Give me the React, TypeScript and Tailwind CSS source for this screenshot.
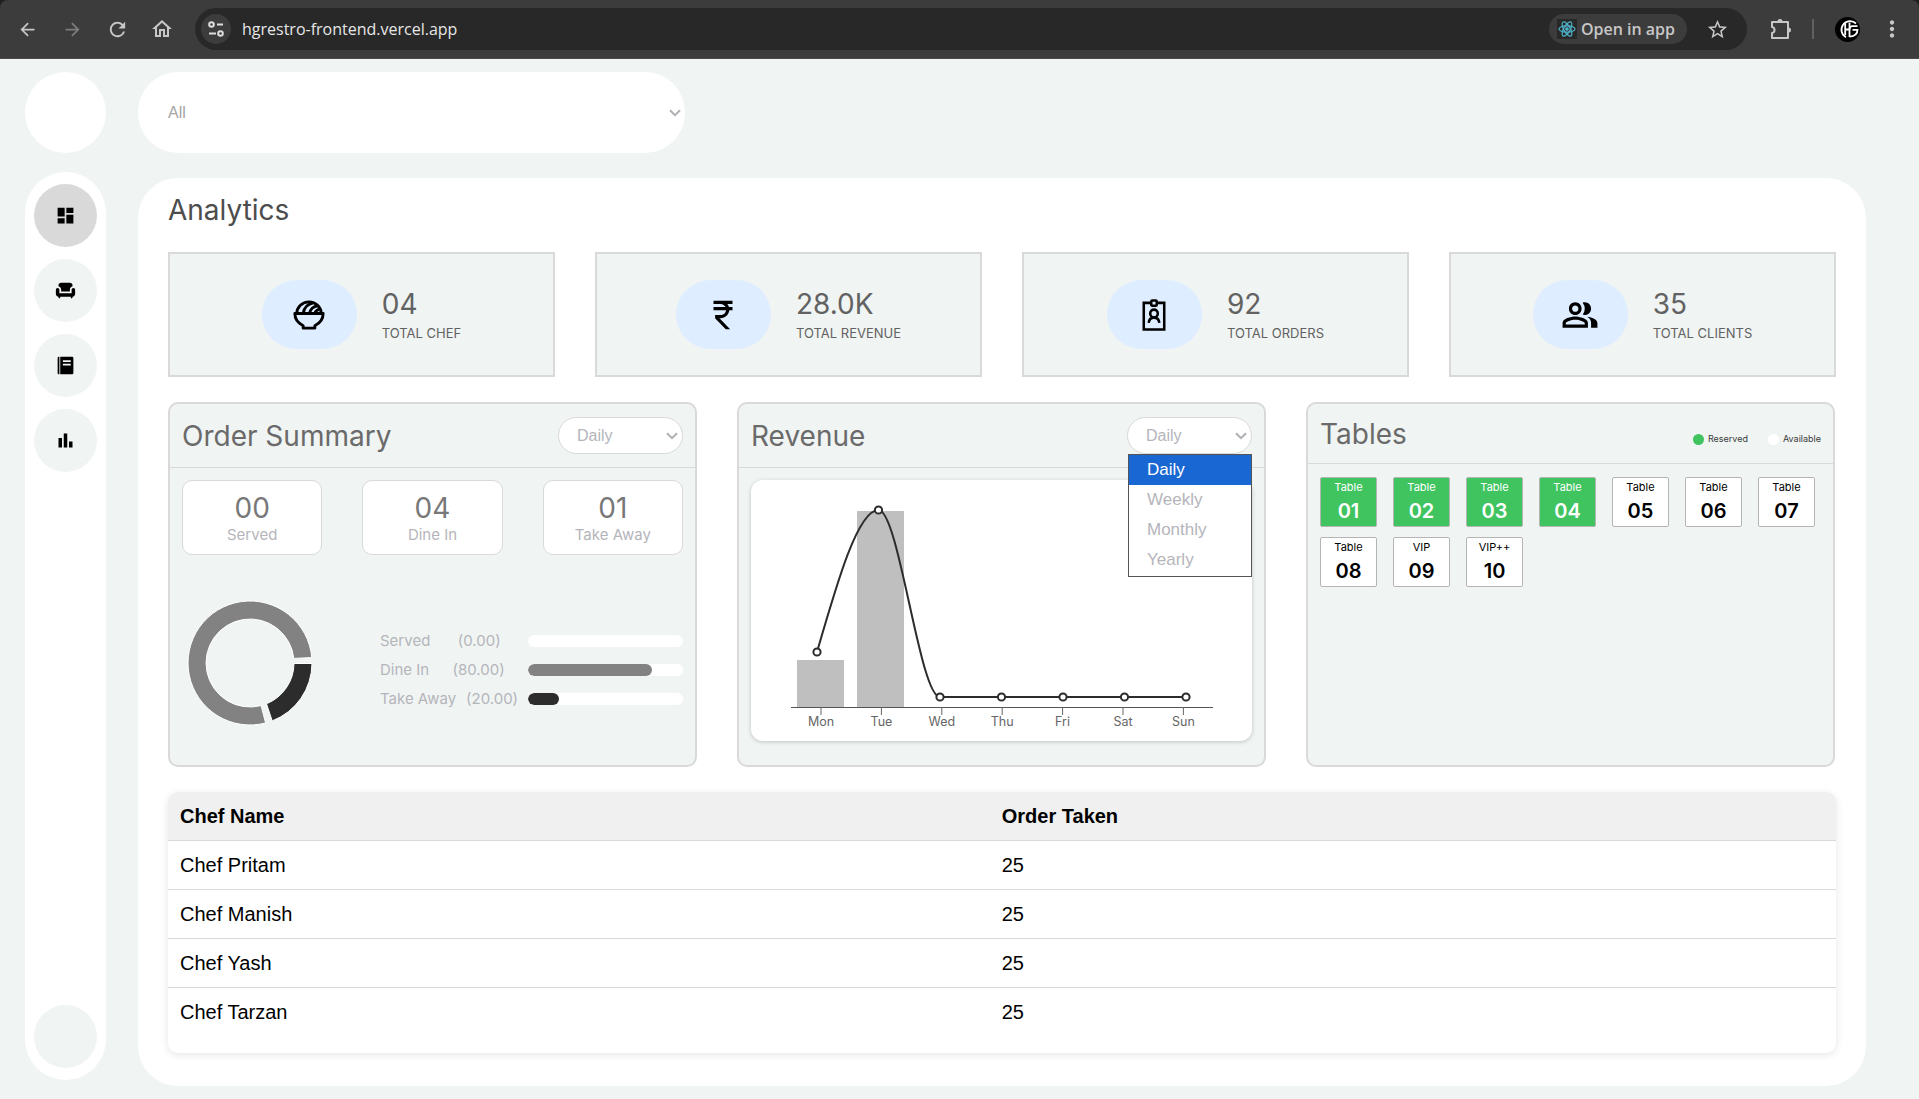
import { useState, type ComponentType, type ReactNode } from 'react';
import {
  MdArrowBack,
  MdArrowForward,
  MdBarChart,
  MdChair,
  MdCurrencyRupee,
  MdDashboard,
  MdMoreVert,
  MdOutlineHome,
  MdOutlinePeopleAlt,
  MdRefresh,
  MdStarBorder,
} from 'react-icons/md';

type IconProps = { size?: number };

const PERIODS = ['Daily', 'Weekly', 'Monthly', 'Yearly'];

/* ---------- icons ---------- */

function OrderBook({ size = 21 }: IconProps) {
  return (
    <svg width={size} height={size} viewBox="0 0 24 24" fill="currentColor" aria-hidden="true">
      <path d="M3 3.5C3 2.7 3.6 2 4.4 2H5v20h-.6c-.8 0-1.4-.7-1.4-1.5z" />
      <path
        fillRule="evenodd"
        d="M6 2h13.500A1.500 1.500 0 0 1 21 3.500v17a1.500 1.500 0 0 1-1.500 1.500H6zM9 6v2h9V6zm0 4v2h9v-2z"
      />
    </svg>
  );
}

function SaladBowl({ size = 36 }: IconProps) {
  return (
    <svg
      width={size}
      height={size}
      viewBox="-1.5 -0.5 39 39"
      fill="none"
      stroke="currentColor"
      strokeWidth="3"
      strokeLinejoin="round"
      aria-hidden="true"
    >
      <path d="M5.500 17.500a12.500 12 0 0 1 25 0" />
      <path d="M12 17.500c.8-6 5-10 10.500-11" />
      <path d="M18.500 17.500c.6-4 4-7.500 8.500-8" />
      <path d="M24 17.500c.4-2 2.500-4 5-4.500" />
      <path d="M3.500 17.500h29c0 5.500-3.500 10-8.500 12.500v2.500H12V30c-5-2.500-8.500-7-8.500-12.500z" />
    </svg>
  );
}

function Clipboard({ size = 36 }: IconProps) {
  return (
    <svg
      width={size}
      height={size}
      viewBox="0 0 36 36"
      fill="none"
      stroke="currentColor"
      strokeWidth="2.400"
      aria-hidden="true"
    >
      <path d="M15 6.500H8.300v25.300h19.400V6.500H21" />
      <rect x="15.400" y="4.200" width="5.200" height="5" rx="1" />
      <circle cx="18" cy="16.500" r="3.600" />
      <path d="M13 25.500c.3-3 2.200-5 5-5s4.700 2 5 5" />
    </svg>
  );
}

function SiteSettings() {
  return (
    <svg width="16" height="18" viewBox="0 0 16 18" fill="none" stroke="#dedede" strokeWidth="2" aria-hidden="true">
      <circle cx="3.500" cy="4.500" r="2.300" />
      <path d="M9 4.500h6M1 13.500h7" />
      <circle cx="12.500" cy="13.500" r="2.300" />
    </svg>
  );
}

function ReactLogo() {
  return (
    <svg width="18" height="18" viewBox="0 0 18 18" fill="none" stroke="#4fb3cc" strokeWidth="1.200" aria-hidden="true">
      <ellipse cx="9" cy="9" rx="8" ry="3.200" />
      <ellipse cx="9" cy="9" rx="8" ry="3.200" transform="rotate(60 9 9)" />
      <ellipse cx="9" cy="9" rx="8" ry="3.200" transform="rotate(120 9 9)" />
      <circle cx="9" cy="9" r="1.200" fill="#4fb3cc" />
    </svg>
  );
}

function Puzzle() {
  return (
    <svg width="22" height="22" viewBox="0 0 22 22" fill="none" stroke="currentColor" strokeWidth="2" strokeLinejoin="round" aria-hidden="true">
      <path d="M2 4h16v16H2v-5c3.400-.4 3.400-5.600 0-6z" />
      <path d="M7.500 3.500a2.500 2.500 0 0 1 5 0zM18.500 9.500a2.500 2.500 0 0 1 0 5z" fill="currentColor" stroke="none" />
    </svg>
  );
}

function ProfileMark() {
  return (
    <svg width="25" height="25" viewBox="0 0 25 25" fill="none" stroke="#fff" strokeWidth="1.800" aria-hidden="true">
      <circle cx="12.500" cy="12.500" r="12.500" fill="#000" stroke="none" />
      <path d="M21 6.500A8.600 8.600 0 1 0 11 20.300" />
      <path d="M10.200 6v12M10.200 12.500h4.300M14.500 5.500v14.500" />
      <path d="M22.500 9.200h-5c-2 0-2.800 1.200-2.800 3M17.500 12.800h5c0 4-2.500 6.500-8 6.800" />
    </svg>
  );
}

function Chevron() {
  return (
    <svg width="12" height="8" viewBox="0 0 12 8" fill="none" stroke="#aeb0b4" strokeWidth="2" aria-hidden="true">
      <path d="M1 1.200l5 5 5-5" />
    </svg>
  );
}

/* ---------- browser toolbar ---------- */

function ToolbarButton({ label, className = '', children }: { label: string; className?: string; children: ReactNode }) {
  return (
    <button type="button" aria-label={label} className={`flex size-8 items-center justify-center ${className}`}>
      {children}
    </button>
  );
}

function BrowserBar() {
  return (
    <div className="bg-[#1f1f1f]">
      <header className="flex h-[59px] items-center rounded-t-lg border-b border-[#4a4a4a] bg-[#3c3c3c] font-['Open_Sans',sans-serif] text-[#c7c7c7]">
        <nav aria-label="Browser" className="flex gap-[13px] pl-[11px]">
          <ToolbarButton label="Back">
            <MdArrowBack size={21} />
          </ToolbarButton>
          <ToolbarButton label="Forward" className="text-[#7c7c7c]">
            <MdArrowForward size={21} />
          </ToolbarButton>
          <ToolbarButton label="Reload">
            <MdRefresh size={23} />
          </ToolbarButton>
          <ToolbarButton label="Home">
            <MdOutlineHome size={24} />
          </ToolbarButton>
        </nav>
        <div className="ml-[17px] flex h-[42px] flex-1 items-center rounded-full bg-[#282828] pr-[14px] pl-[6px]">
          <button
            type="button"
            aria-label="Site information"
            className="flex size-[30px] items-center justify-center rounded-full bg-[#3c3c3c]"
          >
            <SiteSettings />
          </button>
          <input
            aria-label="Address"
            defaultValue="hgrestro-frontend.vercel.app"
            className="ml-[11px] min-w-0 flex-1 bg-transparent text-[16px] text-[#e6e6e6] outline-none"
          />
          <button
            type="button"
            className="flex h-[30px] items-center gap-1 rounded-full bg-[#3c3c3c] pr-3 pl-2 text-[16px] font-semibold text-[#c7c7c7]"
          >
            <span className="flex size-5 items-center justify-center bg-[#282828]">
              <ReactLogo />
            </span>
            Open in app
          </button>
          <ToolbarButton label="Bookmark" className="ml-[14px]">
            <MdStarBorder size={23} />
          </ToolbarButton>
        </div>
        <div className="flex items-center pr-[11px]">
          <ToolbarButton label="Extensions" className="ml-[18px]">
            <Puzzle />
          </ToolbarButton>
          <span className="mx-[15px] h-5 w-[2px] bg-[#606060]" />
          <ToolbarButton label="Profile" className="ml-[2px]">
            <ProfileMark />
          </ToolbarButton>
          <ToolbarButton label="Menu" className="ml-[13px]">
            <MdMoreVert size={26} />
          </ToolbarButton>
        </div>
      </header>
    </div>
  );
}

/* ---------- sidebar ---------- */

const NAV: { label: string; Icon: ComponentType<IconProps> }[] = [
  { label: 'Dashboard', Icon: MdDashboard },
  { label: 'Tables', Icon: MdChair },
  { label: 'Orders', Icon: OrderBook },
  { label: 'Statistics', Icon: MdBarChart },
];

function Sidebar() {
  return (
    <aside className="flex w-[81px] shrink-0 flex-col gap-[19px] pb-[6px]">
      <div className="size-[81px] rounded-full bg-white" />
      <nav
        aria-label="Sections"
        className="flex flex-1 flex-col items-center justify-between rounded-full bg-white py-3"
      >
        <div className="flex flex-col gap-3">
          {NAV.map(({ label, Icon }, i) => (
            <button
              key={label}
              type="button"
              aria-label={label}
              className={`flex size-[63px] items-center justify-center rounded-full text-black ${
                i === 0 ? 'bg-[#d9d9d9]' : 'bg-[#f0f4f3]'
              }`}
            >
              <Icon size={21} />
            </button>
          ))}
        </div>
        <div className="size-[63px] rounded-full bg-[#f0f4f3]" />
      </nav>
    </aside>
  );
}

/* ---------- analytics ---------- */

const STATS: { value: string; label: string; Icon: ComponentType<IconProps> }[] = [
  { value: '04', label: 'TOTAL CHEF', Icon: SaladBowl },
  { value: '28.0K', label: 'TOTAL REVENUE', Icon: MdCurrencyRupee },
  { value: '92', label: 'TOTAL ORDERS', Icon: Clipboard },
  { value: '35', label: 'TOTAL CLIENTS', Icon: MdOutlinePeopleAlt },
];

function StatCard({ value, label, Icon }: (typeof STATS)[number]) {
  return (
    <article className="flex h-[125px] items-center justify-center gap-[25px] border-2 border-[#d9d9d9] bg-[#f0f4f3]">
      <div className="flex h-[69px] w-[95px] items-center justify-center rounded-full bg-[#deedff] text-black">
        <Icon size={38} />
      </div>
      <div className="text-[#626262]">
        <p className="text-[28px] leading-[34px]">{value}</p>
        <p className="pt-[2px] text-[13px] leading-[20px]">{label}</p>
      </div>
    </article>
  );
}

function PeriodSelect({ label, children }: { label: string; children?: ReactNode }) {
  const [period, setPeriod] = useState('Daily');
  return (
    <div className="relative w-[125px]">
      <select
        aria-label={label}
        value={period}
        onChange={(e) => setPeriod(e.target.value)}
        className="h-[37px] w-full appearance-none rounded-full border border-[#d9d9d9] bg-white pl-[18px] font-['Liberation_Sans',sans-serif] text-[16px] text-[#b5b5bb] outline-none"
      >
        {PERIODS.map((p) => (
          <option key={p}>{p}</option>
        ))}
      </select>
      <span className="pointer-events-none absolute inset-y-0 right-[5px] flex items-center">
        <Chevron />
      </span>
      {children}
    </div>
  );
}

function Widget({ title, action, children }: { title: string; action: ReactNode; children: ReactNode }) {
  return (
    <section className="flex h-[365px] flex-col rounded-[10px] border-2 border-[#d9d9d9] bg-[#f0f4f3]">
      <div className="flex items-center justify-between border-b border-[#d9d9d9] px-3 py-[13px]">
        <h2 className="text-[28px] leading-[34px] text-[#6a6a6a]">{title}</h2>
        {action}
      </div>
      {children}
    </section>
  );
}

const SUMMARY = [
  { count: '00', label: 'Served', share: 0, color: 'bg-white' },
  { count: '04', label: 'Dine In', share: 80, color: 'bg-[#828282]' },
  { count: '01', label: 'Take Away', share: 20, color: 'bg-[#2c2c2c]' },
];

function Donut() {
  return (
    <svg width="126" height="126" viewBox="-63 -63 126 126" stroke="#fff" strokeWidth="1" role="img" aria-label="Order split">
      <path d="M61.800 -5.400A62 62 0 1 0 15.600 60L11.100 42.600A44 44 0 1 1 43.800 -4.600z" fill="#828282" />
      <path d="M62 0.500A62 62 0 0 1 22.200 57.900L16.500 40.800A44 44 0 0 0 44 0.500z" fill="#2c2c2c" />
    </svg>
  );
}

function OrderSummary() {
  return (
    <Widget title="Order Summary" action={<PeriodSelect label="Order summary period" />}>
      <div className="grid grid-cols-3 gap-10 px-3 pt-3">
        {SUMMARY.map((s) => (
          <div key={s.label} className="h-[75px] rounded-[10px] border border-[#d9d9d9] bg-white pt-[10px] text-center">
            <p className="text-[28px] leading-[34px] text-[#787878]">{s.count}</p>
            <p className="text-[15px] leading-[20px] text-[#b5b5bb]">{s.label}</p>
          </div>
        ))}
      </div>
      <div className="mt-[45px] flex items-center justify-between pr-3 pl-[17px]">
        <Donut />
        <ul className="mt-[14px] flex w-[303px] flex-col gap-[9px] text-[15px] leading-[20px] text-[#b5b5bb]">
          {SUMMARY.map((s) => (
            <li key={s.label} className="flex items-center">
              <span>{s.label}</span>
              <span className="flex-1 text-center">({s.share.toFixed(2)})</span>
              <span className="h-3 w-[155px] overflow-hidden rounded-full bg-white">
                <span className={`block h-full rounded-full ${s.color}`} style={{ width: `${s.share}%` }} />
              </span>
            </li>
          ))}
        </ul>
      </div>
    </Widget>
  );
}

const DAYS = ['Mon', 'Tue', 'Wed', 'Thu', 'Fri', 'Sat', 'Sun'];
const POINT_Y = [172, 30, 217, 217, 217, 217, 217];

function RevenueChart() {
  return (
    <svg viewBox="0 0 501 261" className="block w-full" role="img" aria-label="Revenue by day">
      <rect x="46" y="180" width="47" height="47" fill="#bfbfbf" />
      <rect x="106" y="31" width="47" height="196" fill="#bfbfbf" />
      <path d="M40 227.500H462" stroke="#555" strokeWidth="1" />
      {DAYS.map((day, i) => (
        <g key={day}>
          <path d={`M${70 + i * 60.4} 227v8`} stroke="#666" strokeWidth="1" />
          <text x={70 + i * 60.4} y="246" textAnchor="middle" fontSize="12.5" fill="#666">
            {day}
          </text>
        </g>
      ))}
      <path
        d="M66 172C86.500 101 107 30 127.500 30C148 30 168.500 217 189 217H435"
        fill="none"
        stroke="#2c2c2c"
        strokeWidth="2"
      />
      {POINT_Y.map((y, i) => (
        <circle key={DAYS[i]} cx={66 + i * 61.5} cy={y} r="3.600" fill="#fff" stroke="#2c2c2c" strokeWidth="2" />
      ))}
    </svg>
  );
}

function Revenue() {
  return (
    <Widget
      title="Revenue"
      action={
        <PeriodSelect label="Revenue period">
          <ul
            role="listbox"
            aria-label="Revenue period options"
            className="absolute top-full right-0 z-10 w-[124px] border border-[#555] bg-white pb-px font-['Liberation_Sans',sans-serif] text-[17px] leading-[30px] text-[#b5b5bb]"
          >
            {PERIODS.map((p, i) => (
              <li
                key={p}
                role="option"
                aria-selected={i === 0}
                className={`pl-[18px] ${i === 0 ? 'bg-[#1967d2] text-white' : ''}`}
              >
                {p}
              </li>
            ))}
          </ul>
        </PeriodSelect>
      }
    >
      <div className="mx-3 mt-3 rounded-xl bg-white shadow-[0_1px_4px_rgba(0,0,0,0.2)]">
        <RevenueChart />
      </div>
    </Widget>
  );
}

const TABLES = [
  { name: 'Table', reserved: true },
  { name: 'Table', reserved: true },
  { name: 'Table', reserved: true },
  { name: 'Table', reserved: true },
  { name: 'Table', reserved: false },
  { name: 'Table', reserved: false },
  { name: 'Table', reserved: false },
  { name: 'Table', reserved: false },
  { name: 'VIP', reserved: false },
  { name: 'VIP++', reserved: false },
];

function Tables() {
  return (
    <section className="flex h-[365px] flex-col rounded-[10px] border-2 border-[#d9d9d9] bg-[#f0f4f3]">
      <div className="flex items-end justify-between border-b border-[#d9d9d9] px-3 pt-[13px] pb-3">
        <h2 className="text-[28px] leading-[34px] text-[#6a6a6a]">Tables</h2>
        <div className="flex gap-5 pb-[6px] text-[9px] leading-[12px] text-[#3a3a3a]">
          <span className="flex items-center gap-1">
            <i className="size-[11px] rounded-full bg-[#3fc460]" />
            Reserved
          </span>
          <span className="flex items-center gap-1">
            <i className="size-[11px] rounded-full bg-white" />
            Available
          </span>
        </div>
      </div>
      <div className="flex flex-wrap gap-x-4 gap-y-[10px] px-3 pt-[13px]">
        {TABLES.map((t, i) => (
          <div
            key={i}
            className={`flex h-[50px] w-[57px] flex-col items-center rounded-[2px] border border-[#b4b4b4] pt-[2px] ${
              t.reserved ? 'bg-[#3fc460] text-white' : 'bg-white text-black'
            }`}
          >
            <span className="text-[11px] leading-[14px]">{t.name}</span>
            <span className="pt-[5px] text-[20px] leading-[24px] font-semibold">{String(i + 1).padStart(2, '0')}</span>
          </div>
        ))}
      </div>
    </section>
  );
}

const CHEFS = [
  { name: 'Chef Pritam', orders: 25 },
  { name: 'Chef Manish', orders: 25 },
  { name: 'Chef Yash', orders: 25 },
  { name: 'Chef Tarzan', orders: 25 },
];

function ChefTable() {
  return (
    <div className="mt-[25px] h-[261px] overflow-hidden rounded-[10px] bg-white shadow-[0_2px_8px_rgba(0,0,0,0.1)]">
      <table className="w-full border-collapse text-left font-['Liberation_Sans',sans-serif] text-[20px] leading-[24px] text-black">
        <thead>
          <tr className="border-b border-[#d9d9d9] bg-[#f0f0f0]">
            <th className="p-3 font-bold">Chef Name</th>
            <th className="p-3 font-bold">Order Taken</th>
          </tr>
        </thead>
        <tbody>
          {CHEFS.map((c) => (
            <tr key={c.name} className="border-b border-[#d9d9d9] last:border-b-0">
              <td className="p-3">{c.name}</td>
              <td className="p-3">{c.orders}</td>
            </tr>
          ))}
        </tbody>
      </table>
    </div>
  );
}

export default function App() {
  return (
    <div className="flex min-h-screen flex-col bg-[#f0f4f3] font-['Inter',sans-serif]">
      <BrowserBar />
      <div className="flex flex-1 gap-8 pt-[13px] pr-[53px] pb-[13px] pl-[25px]">
        <Sidebar />
        <div className="flex min-w-0 flex-1 flex-col gap-[25px]">
          <div className="relative h-[81px] w-[547px]">
            <select
              aria-label="Filter"
              className="size-full appearance-none rounded-[40px] bg-white pl-[30px] font-['Liberation_Sans',sans-serif] text-[16px] text-[#a5a5a5] outline-none"
            >
              <option>All</option>
            </select>
            <span className="pointer-events-none absolute inset-y-0 right-1 flex items-center">
              <Chevron />
            </span>
          </div>
          <main className="flex-1 rounded-[40px] bg-white px-[30px] pt-[15px] pb-[33px]">
            <h1 className="text-[28px] leading-[34px] text-[#4d4d4d]">Analytics</h1>
            <div className="mt-[25px] grid grid-cols-4 gap-10">
              {STATS.map((s) => (
                <StatCard key={s.label} {...s} />
              ))}
            </div>
            <div className="mt-[25px] grid grid-cols-3 gap-10 pr-px">
              <OrderSummary />
              <Revenue />
              <Tables />
            </div>
            <ChefTable />
          </main>
        </div>
      </div>
    </div>
  );
}
